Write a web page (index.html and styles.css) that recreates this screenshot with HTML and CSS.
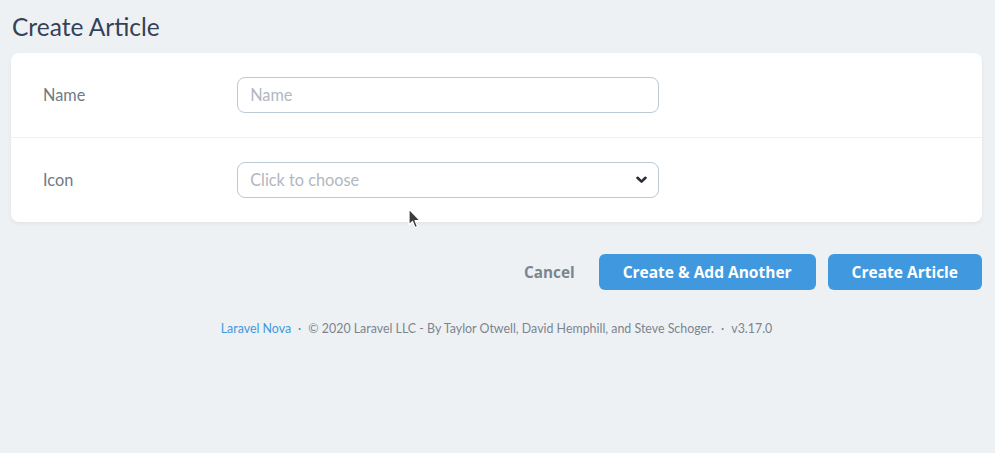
FILE: index.html
```html
<!DOCTYPE html>
<html>
<head>
<meta charset="utf-8">
<link rel="stylesheet" href="styles.css">
</head>
<body>
<div class="page">
  <h1 class="title">Create Article</h1>
  <div class="card">
    <div class="row">
      <div class="label">Name</div>
      <div class="field">
        <input class="input" type="text" placeholder="Name">
      </div>
    </div>
    <div class="row">
      <div class="label">Icon</div>
      <div class="field">
        <div class="select">
          <span class="placeholder">Click to choose</span>
          <svg class="chev" width="11" height="8" viewBox="0 0 11 8"><path d="M1.5 1.8 L5.5 5.6 L9.5 1.8" fill="none" stroke="#252d37" stroke-width="2.6" stroke-linecap="round" stroke-linejoin="round"/></svg>
        </div>
      </div>
    </div>
  </div>
  <div class="actions">
    <span class="cancel">Cancel</span>
    <button class="btn">Create &amp; Add Another</button>
    <button class="btn">Create Article</button>
  </div>
  <p class="footer"><span class="link">Laravel Nova</span><span class="dot">·</span>© 2020 Laravel LLC - By Taylor Otwell, David Hemphill, and Steve Schoger.<span class="dot">·</span>v3.17.0</p>
</div>
<svg class="cursor" width="14" height="22" viewBox="0 0 14 22"><path d="M1 1 L1 17 L4.5 13.5 L7 19.5 L9.5 18.5 L7 12.5 L12 12.5 Z" fill="#3c3c3c" stroke="#fff" stroke-width="1.2" stroke-linejoin="round"/></svg>
</body>
</html>
```
FILE: styles.css
```css
html, body {
  margin: 0;
  padding: 0;
  background: #eef1f4;
  font-family: Lato, "Noto Sans", sans-serif;
}
.page {
  padding: 0 13px 0 11px;
}
.title {
  margin: 0;
  padding: 12px 0 0 1px;
  height: 41px;
  font-size: 24.5px;
  font-weight: 400;
  line-height: 30px;
  color: #344258;
}
.card {
  background: #fff;
  border-radius: 8px;
  box-shadow: 0 2px 4px rgba(0,0,0,0.05);
}
.row {
  display: flex;
  align-items: center;
}
.row + .row {
  border-top: 1px solid #eef1f4;
}
.label {
  width: 20%;
  box-sizing: border-box;
  padding: 23px 32px 25px;
  font-size: 16.3px;
  color: #6f7a85;
}
.field {
  width: 50%;
  box-sizing: border-box;
  padding: 24px 32px;
}
.input, .select {
  display: flex;
  align-items: center;
  width: 100%;
  height: 36px;
  box-sizing: border-box;
  border: 1px solid #bacad6;
  border-radius: 8px;
  padding: 0 12px 2px;
  font-family: inherit;
  font-size: 16.3px;
  color: #3d4852;
  background: #fff;
  outline: none;
}
.input::placeholder, .placeholder {
  color: #b0b8c1;
}
.select {
  justify-content: space-between;
  padding-right: 11px;
}
.chev {
  margin-top: 2px;
}
.actions {
  display: flex;
  justify-content: flex-end;
  align-items: center;
  gap: 12px;
  margin-top: 32px;
}
.cancel {
  font-family: "Open Sans", sans-serif;
  font-size: 15.3px;
  font-weight: 700;
  color: #7c858e;
  margin-right: 12px;
}
.btn {
  height: 36px;
  padding: 0 24px;
  border: none;
  border-radius: 6px;
  background: #4099de;
  color: #fff;
  font-family: "Open Sans", sans-serif;
  font-size: 15.5px;
  font-weight: 700;
}
.footer {
  margin: 31px 0 0;
  text-align: center;
  font-size: 12.4px;
  color: #7c858e;
}
.link {
  color: #4099de;
}
.dot {
  margin: 0 7px;
}
.cursor {
  position: absolute;
  left: 408px;
  top: 208px;
}
```
